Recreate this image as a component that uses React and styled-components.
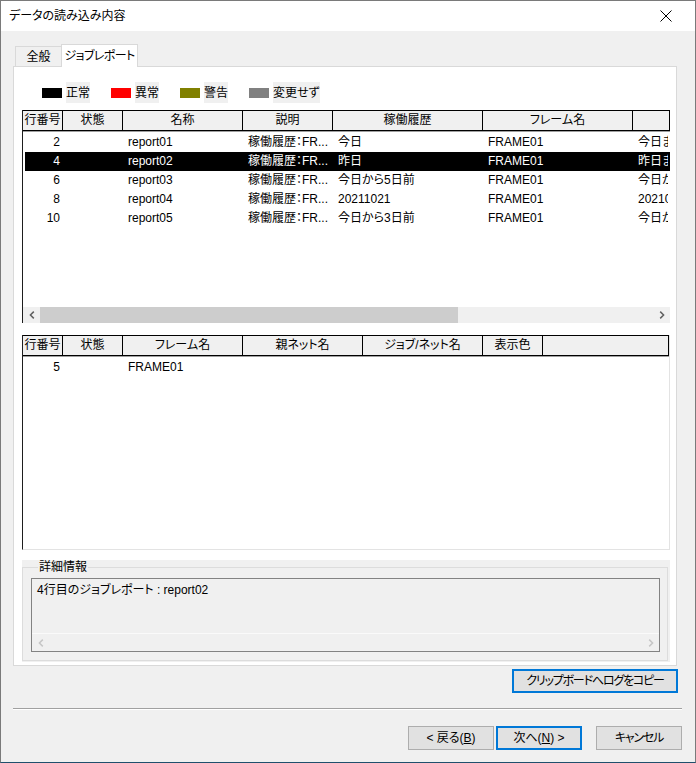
import React from "react";
import styled, { createGlobalStyle } from "styled-components";

const GlobalStyle = createGlobalStyle`
  html, body {
    margin: 0;
    padding: 0;
  }
  body {
    font-family: "Liberation Sans", "Noto Sans CJK JP", sans-serif;
    font-size: 12px;
    font-feature-settings: "palt";
    color: #000;
    background: #fff;
  }
  * {
    box-sizing: border-box;
  }
`;

const upperCols = [
    { label: "行番号", w: 40 },
    { label: "状態", w: 60 },
    { label: "名称", w: 120 },
    { label: "説明", w: 90 },
    { label: "稼働履歴", w: 150 },
    { label: "フレーム名", w: 150 },
    { label: "", w: 150 },
];

const lowerCols = [
    { label: "行番号", w: 40 },
    { label: "状態", w: 60 },
    { label: "フレーム名", w: 120 },
    { label: "親ネット名", w: 120 },
    { label: "ジョブ/ネット名", w: 120 },
    { label: "表示色", w: 60 },
    { label: "" },
];

const reports = [
    { no: 2, name: "report01", hist: "今日", period: "今日ま" },
    { no: 4, name: "report02", hist: "昨日", period: "昨日ま", selected: true },
    { no: 6, name: "report03", hist: "今日から5日前", period: "今日か" },
    { no: 8, name: "report04", hist: "20211021", period: "20210" },
    { no: 10, name: "report05", hist: "今日から3日前", period: "今日か" },
];

const legend = [
    { color: "#000000", label: "正常" },
    { color: "#ff0000", label: "異常" },
    { color: "#808000", label: "警告" },
    { color: "#808080", label: "変更せず" },
];

const Chevron = ({ dir = "left", color = "#606060" }) => (
    <svg width="6" height="8" viewBox="0 0 6 8">
        <path
            d={dir === "left" ? "M4.8 0.6 L1.4 4 L4.8 7.4" : "M1.2 0.6 L4.6 4 L1.2 7.4"}
            fill="none"
            stroke={color}
            strokeWidth="1.5"
        />
    </svg>
);

const App = () => {
    return (
        <>
            <GlobalStyle />
            <Window>
                <TitleBar>
                    <Title>データの読み込み内容</Title>
                    <svg width="12" height="12" viewBox="0 0 12 12">
                        <path d="M0.5 0.5 L11.5 11.5 M11.5 0.5 L0.5 11.5" stroke="#000" strokeWidth="1" />
                    </svg>
                </TitleBar>
                <Body>
                    <TabStrip>
                        <Tab>全般</Tab>
                        <Tab $active>ジョブレポート</Tab>
                    </TabStrip>
                    <Panel>
                        <Legend>
                            {legend.map((l) => (
                                <LegendItem key={l.label}>
                                    <Swatch $color={l.color} />
                                    <LegendLabel>{l.label}</LegendLabel>
                                </LegendItem>
                            ))}
                        </Legend>

                        <ListView $height={213}>
                            <Header>
                                {upperCols.map((c, i) => (
                                    <HeaderCell key={i} $w={c.w}>
                                        {c.label}
                                    </HeaderCell>
                                ))}
                            </Header>
                            <ListBody>
                                {reports.map((r) => (
                                    <Row key={r.no} $selected={r.selected}>
                                        <Cell $w={38} $num>
                                            {r.no}
                                        </Cell>
                                        <Cell $w={60} />
                                        <Cell $w={120}>{r.name}</Cell>
                                        <Cell $w={90}>稼働履歴：FR...</Cell>
                                        <Cell $w={150}>{r.hist}</Cell>
                                        <Cell $w={150}>FRAME01</Cell>
                                        <Cell $w={35}>{r.period}</Cell>
                                    </Row>
                                ))}
                            </ListBody>
                            <HScroll>
                                <ArrowBox>
                                    <Chevron dir="left" />
                                </ArrowBox>
                                <Track>
                                    <Thumb style={{ width: 418 }} />
                                </Track>
                                <ArrowBox>
                                    <Chevron dir="right" />
                                </ArrowBox>
                            </HScroll>
                        </ListView>

                        <ListView $height={215} $gap={12} $framed>
                            <Header>
                                {lowerCols.map((c, i) => (
                                    <HeaderCell key={i} $w={c.w} $fill={!c.w}>
                                        {c.label}
                                    </HeaderCell>
                                ))}
                            </Header>
                            <ListBody>
                                <Row>
                                    <Cell $w={38} $num>
                                        5
                                    </Cell>
                                    <Cell $w={60} />
                                    <Cell $w={120}>FRAME01</Cell>
                                </Row>
                            </ListBody>
                        </ListView>

                        <GroupWrap>
                            <Group>
                                <GroupLegend>詳細情報</GroupLegend>
                                <InfoBox>
                                    <InfoText>4行目のジョブレポート : report02</InfoText>
                                    <InfoScroll>
                                        <ArrowBox>
                                            <Chevron dir="left" color="#c6c6c6" />
                                        </ArrowBox>
                                        <ArrowBox>
                                            <Chevron dir="right" color="#c6c6c6" />
                                        </ArrowBox>
                                    </InfoScroll>
                                </InfoBox>
                            </Group>
                        </GroupWrap>
                    </Panel>

                    <CopyRow>
                        <Button $width={166} $focused $tight>
                            クリップボードへログをコピー
                        </Button>
                    </CopyRow>
                    <Separator />
                    <ButtonRow>
                        <Button $width={86}>
                            &lt; 戻る(<u>B</u>)
                        </Button>
                        <Button $width={86} $focused>
                            次へ(<u>N</u>) &gt;
                        </Button>
                        <Button $width={86} $spaced $tight>
                            キャンセル
                        </Button>
                    </ButtonRow>
                </Body>
            </Window>
        </>
    );
};

const Window = styled.div`
    width: 696px;
    height: 763px;
    display: flex;
    flex-direction: column;
    border: 1px solid #7a7a7a;
    border-bottom-color: #1f4f6c;
    background: #f0f0f0;
    overflow: hidden;
`;

const TitleBar = styled.div`
    height: 30px;
    flex-shrink: 0;
    display: flex;
    align-items: center;
    justify-content: space-between;
    padding: 0 23px 0 8px;
    background: #fff;
`;

const Title = styled.div`
    font-size: 12px;
    line-height: 16px;
`;

const Body = styled.div`
    flex: 1;
    display: flex;
    flex-direction: column;
    padding: 13px 13px 0 12px;
`;

const TabStrip = styled.div`
    height: 22px;
    display: flex;
    align-items: flex-end;
    padding-left: 2px;
`;

const Tab = styled.div`
    position: relative;
    z-index: ${(p) => (p.$active ? 1 : 0)};
    height: ${(p) => (p.$active ? "23px" : "20px")};
    width: ${(p) => (p.$active ? "77px" : "47px")};
    margin-bottom: ${(p) => (p.$active ? "-1px" : "0")};
    margin-left: ${(p) => (p.$active ? "-1px" : "0")};
    display: flex;
    align-items: center;
    justify-content: center;
    padding-bottom: ${(p) => (p.$active ? "1px" : "0")};
    border: 1px solid #d9d9d9;
    border-bottom: none;
    background: ${(p) => (p.$active ? "#fff" : "#f0f0f0")};
    line-height: 16px;
    letter-spacing: ${(p) => (p.$active ? "-0.6px" : "0")};
`;

const Panel = styled.div`
    width: 664px;
    height: 600px;
    display: flex;
    flex-direction: column;
    padding: 15px 5px 3px 8px;
    border: 1px solid #d9d9d9;
    background: #fff;
`;

const Legend = styled.div`
    height: 21px;
    display: flex;
    align-items: center;
    padding-left: 20px;
`;

const LegendItem = styled.div`
    display: flex;
    align-items: center;
    margin-right: 21px;
`;

const Swatch = styled.div`
    width: 20px;
    height: 10px;
    margin-right: 4px;
    background: ${(p) => p.$color};
`;

const LegendLabel = styled.div`
    height: 21px;
    line-height: 22px;
    background: #f0f0f0;
`;

const ListView = styled.div`
    width: 648px;
    height: ${(p) => p.$height}px;
    margin-top: ${(p) => p.$gap || 7}px;
    flex-shrink: 0;
    display: flex;
    flex-direction: column;
    border-left: 1px solid #1e1e1e;
    border-right: ${(p) => (p.$framed ? "1px solid #e3e3e3" : "none")};
    border-bottom: ${(p) => (p.$framed ? "1px solid #e3e3e3" : "none")};
    background: #fff;
    overflow: hidden;
`;

const Header = styled.div`
    height: 21px;
    flex-shrink: 0;
    display: flex;
    overflow: hidden;
    border-top: 1px solid #000;
    border-bottom: 1px solid #000;
    border-right: 1px solid #000;
    box-shadow: 0 1px 0 #a0a0a0;
    background: #f0f0f0;
`;

const HeaderCell = styled.div`
    flex: ${(p) => (p.$fill ? "1 1 auto" : `0 0 ${p.$w}px`)};
    height: 19px;
    line-height: 19px;
    text-align: center;
    white-space: nowrap;
    overflow: hidden;
    border-right: ${(p) => (p.$fill ? "none" : "1px solid #000")};
`;

const ListBody = styled.div`
    flex: 1;
    padding-top: 1px;
    margin-top: 1px;
`;

const Row = styled.div`
    height: 19px;
    margin-left: 2px;
    display: flex;
    align-items: center;
    background: ${(p) => (p.$selected ? "#000" : "transparent")};
    color: ${(p) => (p.$selected ? "#fff" : "#000")};
`;

const Cell = styled.div`
    flex: 0 0 ${(p) => p.$w}px;
    line-height: 19px;
    white-space: nowrap;
    overflow: hidden;
    text-align: ${(p) => (p.$num ? "right" : "left")};
    padding: ${(p) => (p.$num ? "0 3px 0 0" : "0 0 0 5px")};
`;

const HScroll = styled.div`
    height: 16px;
    flex-shrink: 0;
    display: flex;
    background: #f0f0f0;
`;

const ArrowBox = styled.div`
    width: 17px;
    flex-shrink: 0;
    display: flex;
    align-items: center;
    justify-content: center;
`;

const Track = styled.div`
    flex: 1;
    display: flex;
`;

const Thumb = styled.div`
    height: 100%;
    background: #cdcdcd;
`;

const GroupWrap = styled.div`
    width: 648px;
    height: 102px;
    margin-top: 10px;
    padding: 0 2px 1px 0;
    background: #f0f0f0;
`;

const Group = styled.fieldset`
    height: 100%;
    margin: 0;
    padding: 4px 7px 8px 8px;
    border: 1px solid #dcdcdc;
    display: flex;
    flex-direction: column;
`;

const GroupLegend = styled.legend`
    margin-left: 7px;
    padding: 0 1px;
    line-height: 14px;
    color: #000;
`;

const InfoBox = styled.div`
    flex: 1;
    display: flex;
    flex-direction: column;
    border: 1px solid #828282;
    background: #f0f0f0;
`;

const InfoText = styled.div`
    flex: 1;
    padding: 3px 5px;
    line-height: 16px;
`;

const InfoScroll = styled.div`
    height: 18px;
    display: flex;
    justify-content: space-between;
    border-top: 1px solid #fafafa;
`;

const CopyRow = styled.div`
    display: flex;
    justify-content: flex-end;
    margin-top: 3px;
    padding-right: 4px;
`;

const Button = styled.div`
    width: ${(p) => p.$width}px;
    height: 24px;
    display: flex;
    align-items: center;
    justify-content: center;
    margin-left: ${(p) => (p.$spaced ? "14px" : "2px")};
    border: 1px solid ${(p) => (p.$focused ? "#0078d7" : "#adadad")};
    box-shadow: ${(p) => (p.$focused ? "inset 0 0 0 1px #0078d7" : "none")};
    background: #e1e1e1;
    line-height: 16px;
    white-space: nowrap;
    letter-spacing: ${(p) => (p.$tight ? "-1.2px" : "0")};

    u {
        text-decoration: underline;
    }
`;

const Separator = styled.div`
    height: 2px;
    margin-top: 15px;
    border-top: 1px solid #a0a0a0;
    border-bottom: 1px solid #fff;
`;

const ButtonRow = styled.div`
    display: flex;
    justify-content: flex-end;
    margin-top: 16px;
`;

export default App;
